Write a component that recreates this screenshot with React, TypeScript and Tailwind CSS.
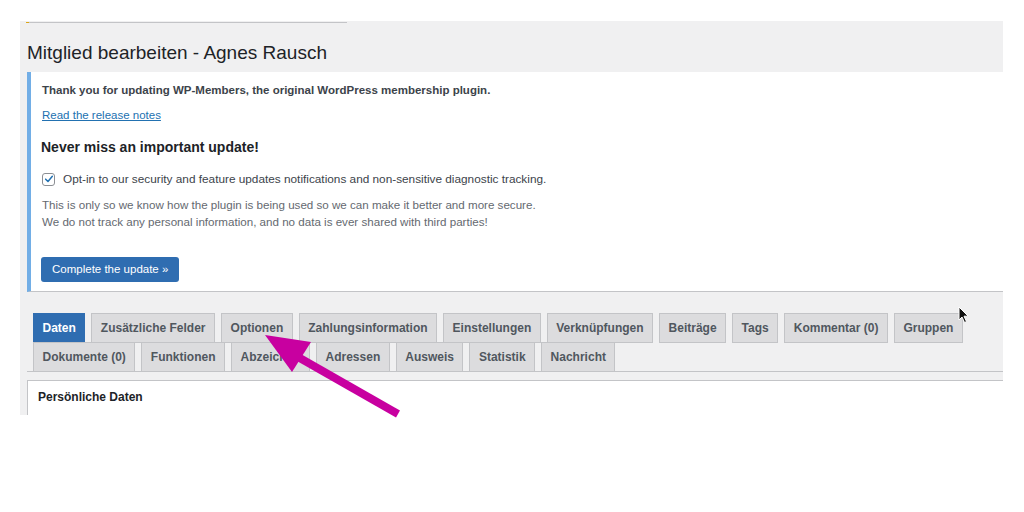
import React from 'react'

const row1 = ['Daten', 'Zusätzliche Felder', 'Optionen', 'Zahlungsinformation', 'Einstellungen', 'Verknüpfungen', 'Beiträge', 'Tags', 'Kommentar (0)', 'Gruppen']
const row2 = ['Dokumente (0)', 'Funktionen', 'Abzeichen', 'Adressen', 'Ausweis', 'Statistik', 'Nachricht']

function Tab({ label, active }: { label: string; active?: boolean }) {
  return (
    <div
      className={
        'h-[30px] -mb-px px-[8.5px] flex items-center border text-[12px] font-bold leading-none whitespace-nowrap ' +
        (active
          ? 'bg-[#2f6db1] border-[#2f6db1] text-white'
          : 'bg-[#dcdcde] border-[#c3c4c7] text-[#50575e]')
      }
    >
      {label}
    </div>
  )
}

export default function App() {
  return (
    <div className="relative w-[1024px] h-[512px] bg-white font-['Liberation_Sans',Arial,sans-serif] text-[#3c434a]">
      <div className="pt-[21px] pl-[20px]">
        <div className="w-[983px] h-[394px] bg-[#f0f0f1] overflow-hidden pl-[7px]">
          {/* oberer Rand */}
          <div className="mt-px -ml-px flex w-[321px] h-px">
            <div className="w-[3px] bg-[#dba617]" />
            <div className="flex-1 bg-[#c3c4c7]" />
          </div>

          <h1 className="mt-[19px] h-[30px] text-[19px] leading-[22px] text-[#1d2327]">
            Mitglied bearbeiten - Agnes Rausch
          </h1>

          {/* Hinweis */}
          <div className="h-[220px] bg-white border-l-4 border-[#72aee6] border-b border-b-[#c3c4c7] pl-[11px] pt-[11px]">
            <p className="text-[11.5px] font-bold leading-[14px] text-[#3c434a]">
              Thank you for updating WP-Members, the original WordPress membership plugin.
            </p>
            <a href="#" className="block mt-[11px] text-[11.5px] leading-[14px] text-[#2271b1] underline">
              Read the release notes
            </a>
            <h2 className="mt-[16px] -ml-px text-[14px] font-bold leading-[18px] text-[#1d2327]">
              Never miss an important update!
            </h2>
            <label className="mt-[16px] flex items-center gap-[8px] text-[11.8px] leading-[14px] text-[#3c434a]">
              <span className="w-[13px] h-[13px] rounded-[3px] border border-[#8c8f94] bg-white flex items-center justify-center">
                <svg viewBox="0 0 12 12" className="w-[10px] h-[10px]">
                  <path d="M2 6.2 L4.8 9 L10 2.8" fill="none" stroke="#2271b1" strokeWidth="1.8" strokeLinecap="round" strokeLinejoin="round" />
                </svg>
              </span>
              Opt-in to our security and feature updates notifications and non-sensitive diagnostic tracking.
            </label>
            <p className="mt-[10px] text-[11.6px] leading-[17px] text-[#646970]">
              This is only so we know how the plugin is being used so we can make it better and more secure.
              <br />
              We do not track any personal information, and no data is ever shared with third parties!
            </p>
            <button className="mt-[27px] -ml-px h-[25px] px-[11px] rounded-[3px] bg-[#2f6db1] text-white text-[11.5px] leading-none">
              Complete the update »
            </button>
          </div>

          {/* Reiter */}
          <div className="mt-[21px] pl-[6px] border-b border-[#c3c4c7]">
            <div className="flex gap-[6px]">
              {row1.map((t, i) => (
                <Tab key={t} label={t} active={i === 0} />
              ))}
            </div>
            <div className="flex gap-[6px]">
              {row2.map((t) => (
                <Tab key={t} label={t} />
              ))}
            </div>
          </div>

          {/* Inhalt */}
          <div className="mt-[8px] h-[60px] bg-white border border-r-0 border-[#c3c4c7] pl-[10px] pt-[9px]">
            <h3 className="text-[12px] font-bold leading-[14px] text-[#1d2327]">Persönliche Daten</h3>
          </div>
        </div>
      </div>

      {/* Markierungspfeil */}
      <svg className="absolute left-0 top-0 pointer-events-none" width="1024" height="512" viewBox="0 0 1024 512">
        <line x1="398" y1="414" x2="298" y2="357" stroke="#c800a0" strokeWidth="8" />
        <polygon points="265,335 311,342 292,372" fill="#c800a0" />
      </svg>

      {/* Mauszeiger */}
      <svg className="absolute left-[958px] top-[306px]" width="12" height="18" viewBox="0 0 12 18">
        <path d="M1 1 L1 14 L4 11 L6.5 16.5 L8.5 15.6 L6 10.2 L10.2 10.2 Z" fill="#111" stroke="#fff" strokeWidth="1" />
      </svg>
    </div>
  )
}
